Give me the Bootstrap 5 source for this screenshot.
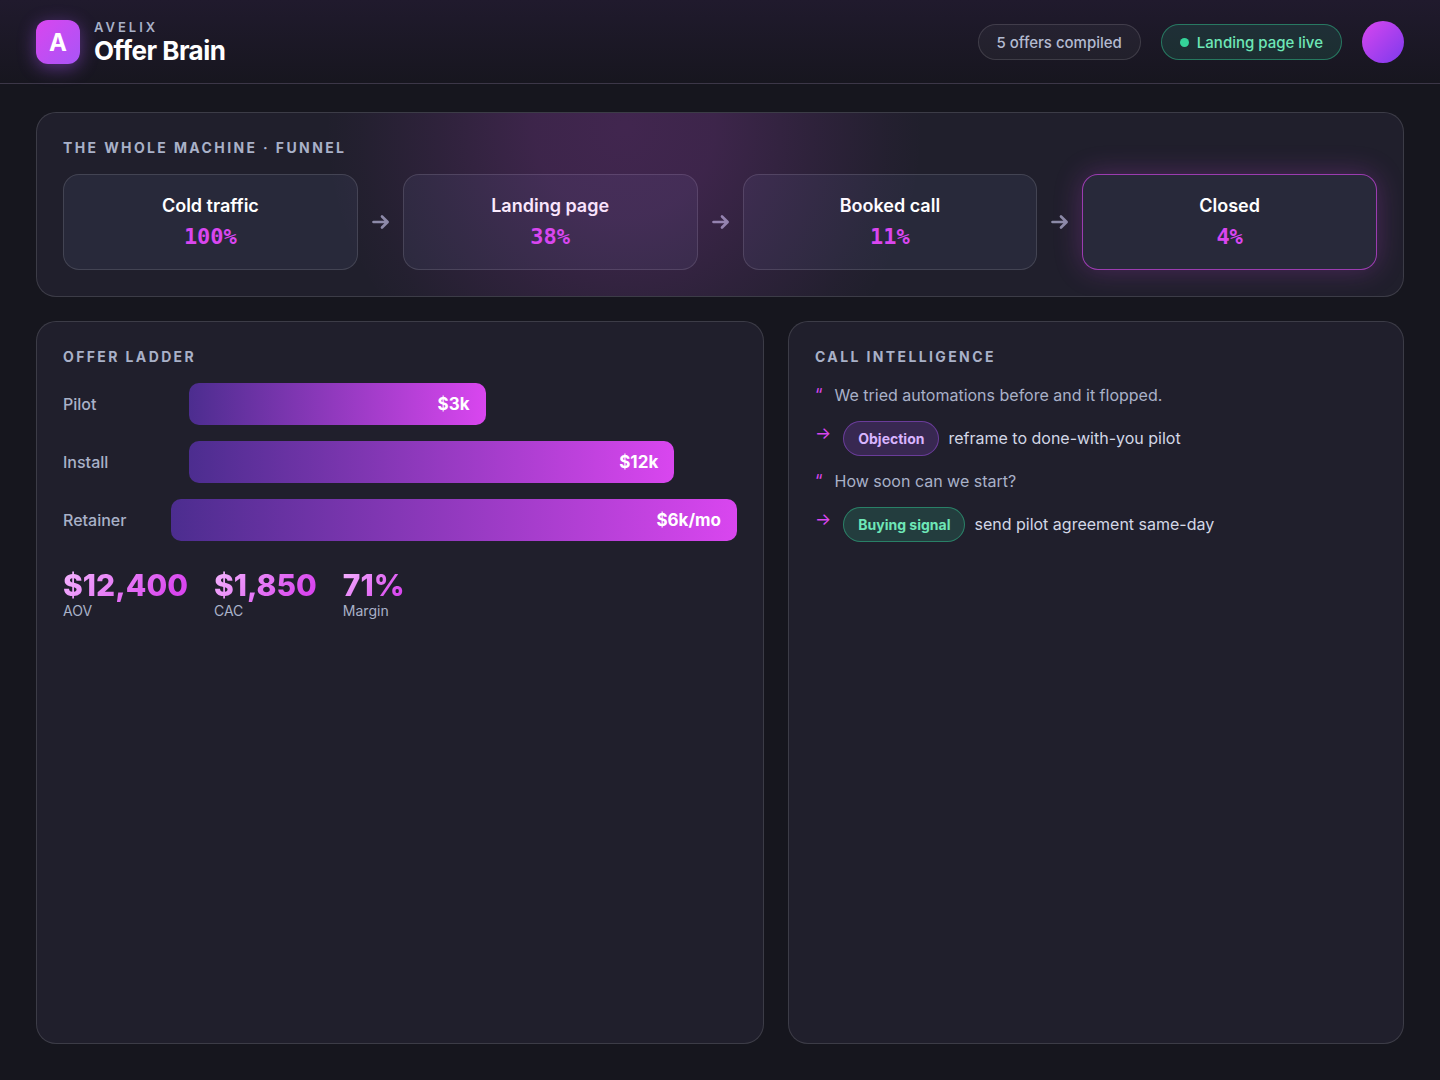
<!DOCTYPE html>
<html lang="en" data-bs-theme="dark">
<head>
<meta charset="utf-8">
<meta name="viewport" content="width=device-width, initial-scale=1">
<title>Avelix Offer Brain</title>
<link href="https://cdn.jsdelivr.net/npm/bootstrap@5.3.0/dist/css/bootstrap.min.css" rel="stylesheet">
<style>
:root { --muted: #a9b1c8; --line: rgba(255,255,255,.13); --pink: #d946ef; }
body { font-family: Inter, sans-serif; background: #16161e; color: #fff; line-height: normal; }
.topbar { padding: 20px 36px 19px; border-bottom: 1px solid var(--line); background: linear-gradient(180deg, #201a2d, #17161f); }
.brand-row { gap: 14px; height: 44px; }
.logo { width: 44px; height: 44px; border-radius: 12px; background: linear-gradient(135deg, #d946ef, #a855f7); box-shadow: 0 4px 18px rgba(168,85,247,.45); font-size: 24px; font-weight: 700; }
.brand-over { font-size: 13px; line-height: 18px; letter-spacing: 3px; font-weight: 600; color: var(--muted); }
.brand-name { font-size: 26px; line-height: 30px; font-weight: 700; letter-spacing: -0.02em; margin: 0; }
.top-actions { gap: 20px; }
.status { height: 36px; padding: 0 18px; border: 1px solid var(--line); border-radius: 18px; background: rgba(255,255,255,.04); color: #b3bad0; font-size: 15px; font-weight: 500; }
.status-live { background: rgba(52,211,153,.12); border-color: rgba(52,211,153,.45); color: #6ee7b7; gap: 8px; }
.dot { width: 9px; height: 9px; border-radius: 50%; background: #34d399; }
.avatar { width: 42px; height: 42px; border-radius: 50%; border: 0; padding: 0; background: linear-gradient(135deg, #d946ef, #7c3aed); }
main { padding: 28px 36px 36px; gap: 24px; }
.panel { background: #201f2c; border: 1px solid var(--line); border-radius: 20px; padding: 26px; }
.panel-title { font-size: 14px; line-height: 17px; font-weight: 700; letter-spacing: 0.17em; color: var(--muted); margin: 0 0 18px; }
.funnel { position: relative; overflow: hidden; }
.funnel::after { content: ""; position: absolute; inset: 0; pointer-events: none; background: radial-gradient(circle 300px at 43% 8%, rgba(217,70,239,.18), rgba(217,70,239,.155) 30%, rgba(217,70,239,.08) 62%, rgba(217,70,239,.02) 88%, rgba(217,70,239,0)); }
.flow { gap: 12px; }
.stage { height: 96px; border: 1px solid var(--line); border-radius: 16px; background: #28293a; gap: 7px; }
.stage-final { border-color: rgba(217,70,239,.65); box-shadow: 0 0 28px rgba(217,70,239,.25); }
.stage-name { font-size: 18px; line-height: 22px; font-weight: 600; }
.stage-rate { font-family: "DejaVu Sans Mono", monospace; font-size: 22px; line-height: 26px; font-weight: 700; color: var(--pink); }
.flow-arrow { width: 21px; height: 20px; flex: none; fill: none; stroke: #8b8ba7; stroke-width: 2.7; stroke-linecap: round; stroke-linejoin: round; }
.lower { display: grid; grid-template-columns: 13fr 11fr; gap: 24px; }
.ladder { gap: 16px; }
.rung { gap: 16px; }
.rung-label { width: 110px; font-size: 16px; font-weight: 500; color: var(--muted); }
.rung-bar { height: 42px; border-radius: 10px; padding-right: 16px; background: linear-gradient(90deg, #4c2d8f, #d946ef); font-size: 17px; font-weight: 700; }
.stats { gap: 26px; margin-top: 26px; }
.stat-num { font-size: 30px; line-height: 36px; font-weight: 800; background: linear-gradient(135deg, #f5b8ff, #d946ef 85%); -webkit-background-clip: text; background-clip: text; color: transparent; }
.stat-label { font-size: 14px; line-height: 16px; color: var(--muted); }
.calls { gap: 13px; font-size: 16px; line-height: 25px; color: #d3d7e6; }
.call { gap: 12px; }
.call-quote { color: var(--muted); }
.call-mark { color: var(--pink); font-size: 17px; }
.reply { gap: 9px; }
.tagpill { padding: 7px 14px; line-height: 19px; font-size: 14px; font-weight: 700; border: 1px solid rgba(168,85,247,.45); background: rgba(168,85,247,.18); color: #d8b4fe; border-radius: 18px; }
.tagpill-buy { border-color: rgba(52,211,153,.45); background: rgba(52,211,153,.17); color: #6ee7b7; }
@media (max-width: 900px) { .lower { grid-template-columns: 1fr; } .flow { flex-wrap: wrap; } }
</style>
<script src="https://cdn.jsdelivr.net/npm/bootstrap@5.3.0/dist/js/bootstrap.bundle.min.js" defer></script>
</head>
<body>
<div class="d-flex flex-column min-vh-100">
  <header class="topbar d-flex justify-content-between align-items-center">
    <div class="brand-row d-flex align-items-center">
      <div class="logo d-flex align-items-center justify-content-center">A</div>
      <div>
        <div class="brand-over">AVELIX</div>
        <h1 class="brand-name">Offer Brain</h1>
      </div>
    </div>
    <div class="top-actions d-flex align-items-center">
      <span class="status d-flex align-items-center">5 offers compiled</span>
      <span class="status status-live d-flex align-items-center"><span class="dot"></span>Landing page live</span>
      <button type="button" class="avatar" aria-label="Account"></button>
    </div>
  </header>

  <main class="flex-grow-1 d-flex flex-column">
    <section class="panel funnel">
      <h2 class="panel-title">THE WHOLE MACHINE · FUNNEL</h2>
      <div class="flow d-flex align-items-center">
        <div class="stage flex-fill w-100 d-flex flex-column align-items-center justify-content-center"><div class="stage-name">Cold traffic</div><div class="stage-rate">100%</div></div>
        <svg class="flow-arrow" viewBox="0 0 21 20" aria-hidden="true"><path d="M3.5 10H17.5M12 4.5L17.6 10L12 15.5"/></svg>
        <div class="stage flex-fill w-100 d-flex flex-column align-items-center justify-content-center"><div class="stage-name">Landing page</div><div class="stage-rate">38%</div></div>
        <svg class="flow-arrow" viewBox="0 0 21 20" aria-hidden="true"><path d="M3.5 10H17.5M12 4.5L17.6 10L12 15.5"/></svg>
        <div class="stage flex-fill w-100 d-flex flex-column align-items-center justify-content-center"><div class="stage-name">Booked call</div><div class="stage-rate">11%</div></div>
        <svg class="flow-arrow" viewBox="0 0 21 20" aria-hidden="true"><path d="M3.5 10H17.5M12 4.5L17.6 10L12 15.5"/></svg>
        <div class="stage stage-final flex-fill w-100 d-flex flex-column align-items-center justify-content-center"><div class="stage-name">Closed</div><div class="stage-rate">4%</div></div>
      </div>
    </section>

    <div class="lower flex-grow-1">
      <section class="panel">
        <h2 class="panel-title">OFFER LADDER</h2>
        <div class="ladder d-flex flex-column">
          <div class="rung d-flex align-items-center"><span class="rung-label">Pilot</span><div class="rung-bar d-flex align-items-center justify-content-end" style="width: 44%">$3k</div></div>
          <div class="rung d-flex align-items-center"><span class="rung-label">Install</span><div class="rung-bar d-flex align-items-center justify-content-end" style="width: 72%">$12k</div></div>
          <div class="rung d-flex align-items-center"><span class="rung-label">Retainer</span><div class="rung-bar d-flex align-items-center justify-content-end" style="width: 100%">$6k/mo</div></div>
        </div>
        <div class="stats d-flex">
          <div><div class="stat-num">$12,400</div><div class="stat-label">AOV</div></div>
          <div><div class="stat-num">$1,850</div><div class="stat-label">CAC</div></div>
          <div><div class="stat-num">71%</div><div class="stat-label">Margin</div></div>
        </div>
      </section>

      <section class="panel">
        <h2 class="panel-title">CALL INTELLIGENCE</h2>
        <div class="calls d-flex flex-column">
          <div class="call call-quote d-flex"><span class="call-mark">“</span><span>We tried automations before and it flopped.</span></div>
          <div class="call d-flex"><span class="call-mark">→</span><div class="reply d-flex align-items-center"><span class="tagpill">Objection</span><span>reframe to done-with-you pilot</span></div></div>
          <div class="call call-quote d-flex"><span class="call-mark">“</span><span>How soon can we start?</span></div>
          <div class="call d-flex"><span class="call-mark">→</span><div class="reply d-flex align-items-center"><span class="tagpill tagpill-buy">Buying signal</span><span>send pilot agreement same-day</span></div></div>
        </div>
      </section>
    </div>
  </main>
</div>
</body>
</html>
